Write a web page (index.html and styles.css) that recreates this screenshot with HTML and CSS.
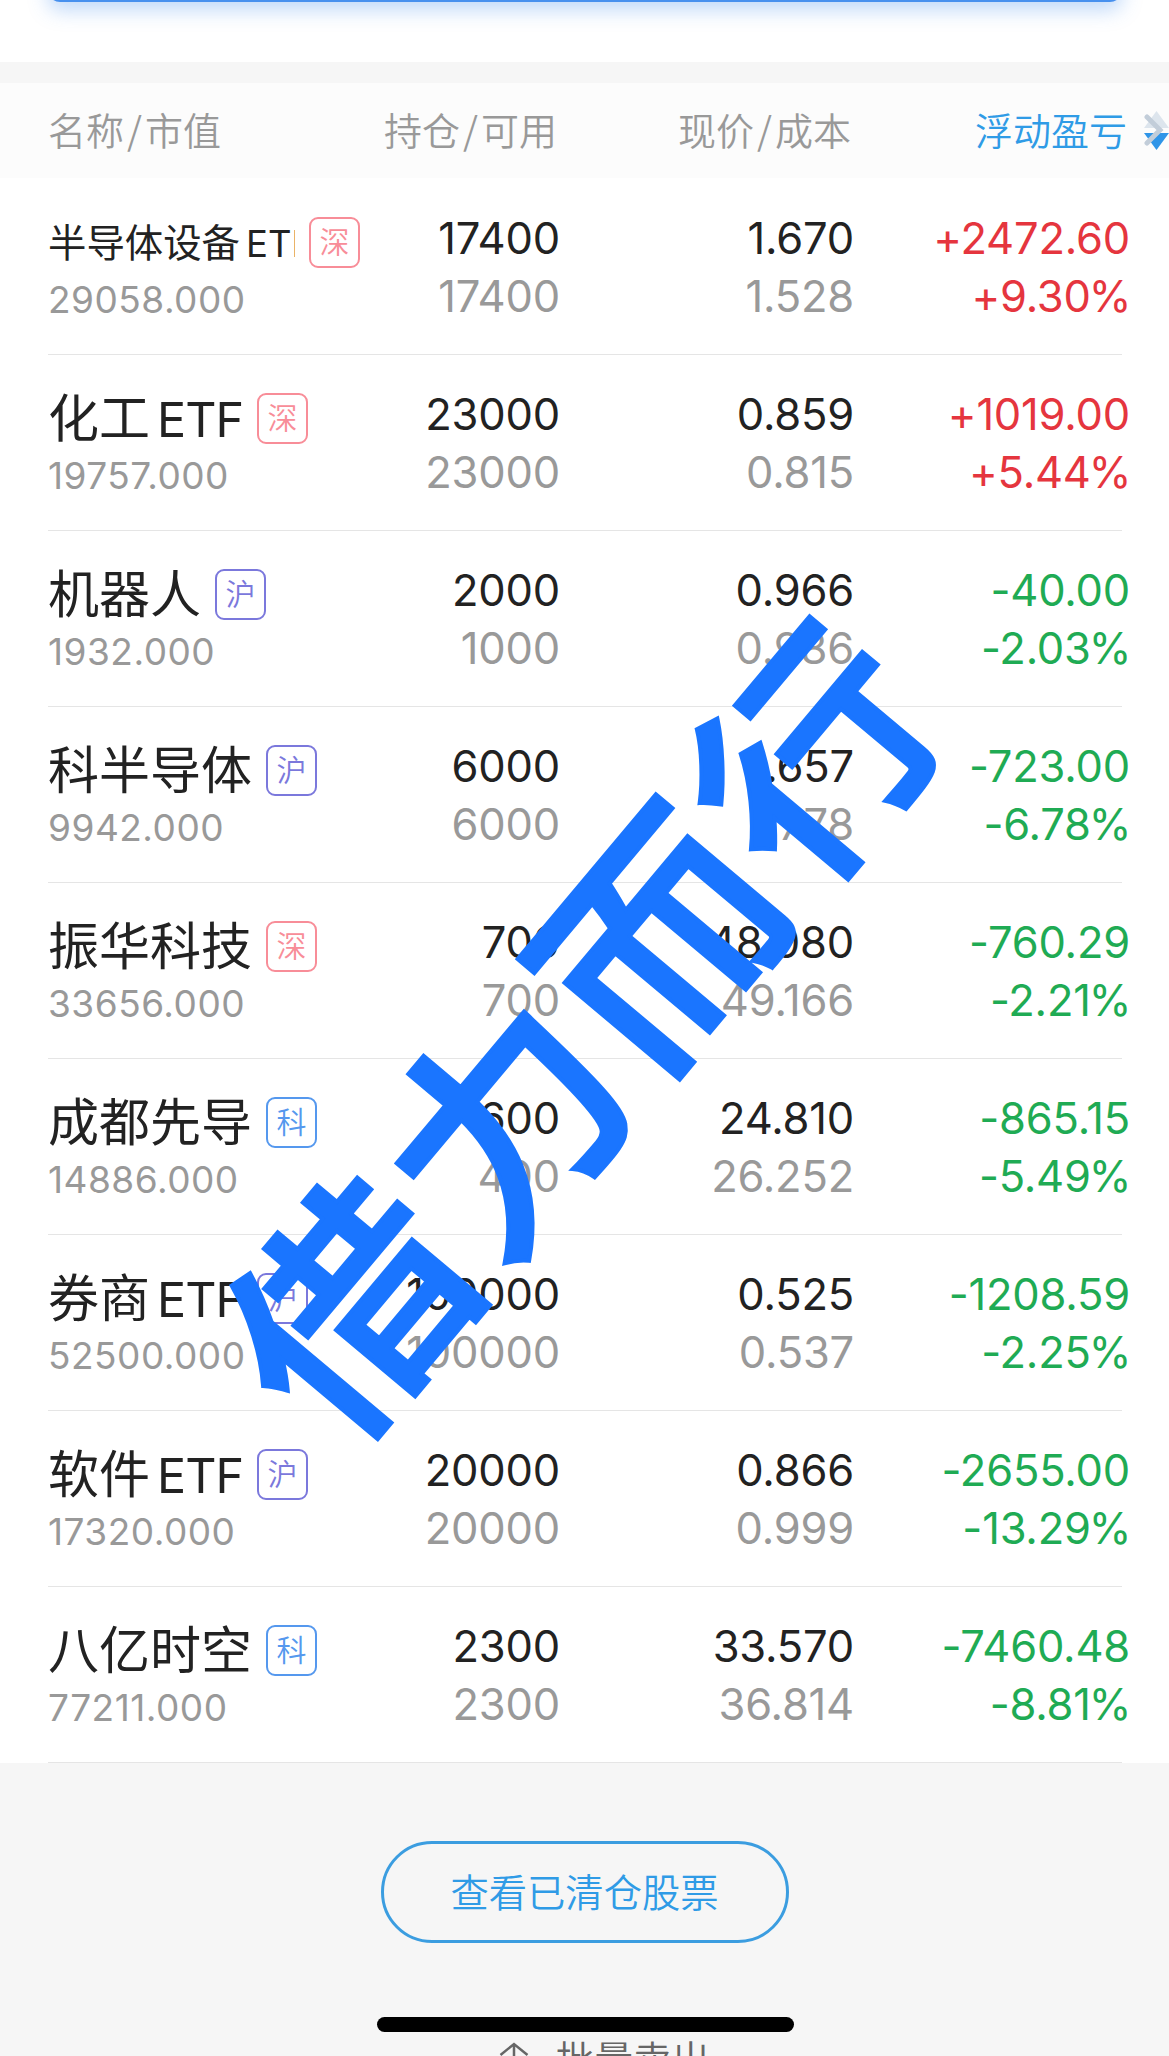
FILE: index.html
```
<!DOCTYPE html>
<html lang="zh-CN">
<head>
    <meta charset="UTF-8">
    <title>持仓</title>
    <link rel="stylesheet" href="styles.css">
</head>
<body>
<div class="page">
    <div class="banner-wrap">
        <div class="banner"></div>
    </div>
    <div class="table-head">
        <div class="cell-name">名称<span class="slash">/</span>市值</div>
        <div class="cell-hold">持仓<span class="slash">/</span>可用</div>
        <div class="cell-price">现价<span class="slash">/</span>成本</div>
        <div class="cell-profit active">浮动盈亏</div>
        <svg class="sort-icon" width="25" height="40" viewBox="0 0 25 40">
            <path d="M12.5 0 L25 17 H0 Z" fill="#dde5ed"/>
            <path d="M0 22 H25 L12.5 39 Z" fill="#2f95e8"/>
            <path d="M3 6 L16 19 L3 32" fill="none" stroke="#c2cdd9" stroke-width="5" stroke-linecap="round"/>
        </svg>
    </div>
    <div class="list">
        <div class="row">
            <div class="cell-name">
                <div class="title"><span class="name small">半导体设备<span class="latin">ETF</span></span><span class="tag shen">深</span></div>
                <div class="value">29058.000</div>
            </div>
            <div class="cell-hold"><p>17400</p><p class="sub">17400</p></div>
            <div class="cell-price"><p>1.670</p><p class="sub">1.528</p></div>
            <div class="cell-profit up"><p>+2472.60</p><p>+9.30<span class="pct">%</span></p></div>
        </div>
        <div class="row">
            <div class="cell-name">
                <div class="title"><span class="name">化工<span class="latin">ETF</span></span><span class="tag shen">深</span></div>
                <div class="value">19757.000</div>
            </div>
            <div class="cell-hold"><p>23000</p><p class="sub">23000</p></div>
            <div class="cell-price"><p>0.859</p><p class="sub">0.815</p></div>
            <div class="cell-profit up"><p>+1019.00</p><p>+5.44<span class="pct">%</span></p></div>
        </div>
        <div class="row">
            <div class="cell-name">
                <div class="title"><span class="name">机器人</span><span class="tag hu">沪</span></div>
                <div class="value">1932.000</div>
            </div>
            <div class="cell-hold"><p>2000</p><p class="sub">1000</p></div>
            <div class="cell-price"><p>0.966</p><p class="sub">0.986</p></div>
            <div class="cell-profit down"><p>-40.00</p><p>-2.03<span class="pct">%</span></p></div>
        </div>
        <div class="row">
            <div class="cell-name">
                <div class="title"><span class="name">科半导体</span><span class="tag hu">沪</span></div>
                <div class="value">9942.000</div>
            </div>
            <div class="cell-hold"><p>6000</p><p class="sub">6000</p></div>
            <div class="cell-price"><p>1.657</p><p class="sub">1.778</p></div>
            <div class="cell-profit down"><p>-723.00</p><p>-6.78<span class="pct">%</span></p></div>
        </div>
        <div class="row">
            <div class="cell-name">
                <div class="title"><span class="name">振华科技</span><span class="tag shen">深</span></div>
                <div class="value">33656.000</div>
            </div>
            <div class="cell-hold"><p>700</p><p class="sub">700</p></div>
            <div class="cell-price"><p>48.080</p><p class="sub">49.166</p></div>
            <div class="cell-profit down"><p>-760.29</p><p>-2.21<span class="pct">%</span></p></div>
        </div>
        <div class="row">
            <div class="cell-name">
                <div class="title"><span class="name">成都先导</span><span class="tag ke">科</span></div>
                <div class="value">14886.000</div>
            </div>
            <div class="cell-hold"><p>600</p><p class="sub">400</p></div>
            <div class="cell-price"><p>24.810</p><p class="sub">26.252</p></div>
            <div class="cell-profit down"><p>-865.15</p><p>-5.49<span class="pct">%</span></p></div>
        </div>
        <div class="row">
            <div class="cell-name">
                <div class="title"><span class="name">券商<span class="latin">ETF</span></span><span class="tag hu">沪</span></div>
                <div class="value">52500.000</div>
            </div>
            <div class="cell-hold"><p>100000</p><p class="sub">100000</p></div>
            <div class="cell-price"><p>0.525</p><p class="sub">0.537</p></div>
            <div class="cell-profit down"><p>-1208.59</p><p>-2.25<span class="pct">%</span></p></div>
        </div>
        <div class="row">
            <div class="cell-name">
                <div class="title"><span class="name">软件<span class="latin">ETF</span></span><span class="tag hu">沪</span></div>
                <div class="value">17320.000</div>
            </div>
            <div class="cell-hold"><p>20000</p><p class="sub">20000</p></div>
            <div class="cell-price"><p>0.866</p><p class="sub">0.999</p></div>
            <div class="cell-profit down"><p>-2655.00</p><p>-13.29<span class="pct">%</span></p></div>
        </div>
        <div class="row">
            <div class="cell-name">
                <div class="title"><span class="name">八亿时空</span><span class="tag ke">科</span></div>
                <div class="value">77211.000</div>
            </div>
            <div class="cell-hold"><p>2300</p><p class="sub">2300</p></div>
            <div class="cell-price"><p>33.570</p><p class="sub">36.814</p></div>
            <div class="cell-profit down"><p>-7460.48</p><p>-8.81<span class="pct">%</span></p></div>
        </div>
    </div>
    <div class="footer">
        <button class="cleared-btn">查看已清仓股票</button>
        <div class="home-bar"></div>
        <div class="batch">
            <svg width="30" height="36" viewBox="0 0 30 36">
                <path d="M1.5 13 L15 2 L28.5 13 M15 2 V36" fill="none" stroke="#666" stroke-width="2.5"/>
            </svg>
            <span>批量卖出</span>
        </div>
    </div>
    <div class="watermark">借力而行</div>
</div>
</body>
</html>
```

FILE: styles.css
```
html, body{
    margin: 0;
    padding: 0;
}

body{
    background: #f6f6f6;
    font-family: Inter, "Noto Sans CJK SC", sans-serif;
    color: #222;
}

p{
    margin: 0;
}

.page{
    position: relative;
    width: 1169px;
    height: 2056px;
    overflow: hidden;
    display: flex;
    flex-direction: column;
}

.banner-wrap{
    box-sizing: border-box;
    height: 62px;
    padding: 0 47px 0 48px;
    background: #fff;
    overflow: hidden;
    flex-shrink: 0;
}

.banner{
    height: 40px;
    margin-top: -38px;
    border-radius: 12px;
    background: #4790ee;
    box-shadow: 0 8px 20px rgba(71, 144, 238, 0.35);
}

.table-head, .row{
    display: grid;
    grid-template-columns: 312px 200px 294px 276px;
}

/* column titles */
.table-head{
    position: relative;
    box-sizing: border-box;
    height: 95px;
    margin-top: 21px;
    padding-left: 48px;
    background: #fcfcfc;
    font-family: "Noto Sans CJK SC", sans-serif;
    font-size: 38px;
    font-weight: 350;
    line-height: 91px;
    color: #999;
    flex-shrink: 0;
}

.table-head .cell-hold,
.table-head .cell-price,
.table-head .cell-profit{
    padding-right: 3px;
    text-align: right;
}

.slash{
    margin: 0 3px;
}

.table-head .active{
    color: #2f9be6;
}

.sort-icon{
    position: absolute;
    top: 28px;
    left: 1144px;
}

.list{
    padding-top: 1px;
    background: #fff;
    flex-shrink: 0;
}

.row{
    box-sizing: border-box;
    height: 176px;
    margin: 0 47px 0 48px;
    border-bottom: 1px solid #e5e5e5;
}

.cell-hold, .cell-price, .cell-profit{
    text-align: right;
    white-space: nowrap;
}

.row .cell-hold, .row .cell-price, .row .cell-profit{
    padding-top: 30px;
    font-size: 43.5px;
    line-height: 58px;
    letter-spacing: -0.2px;
}

.pct{
    margin-left: -2px;
    letter-spacing: -1.5px;
}

.title{
    display: flex;
    align-items: center;
    height: 51px;
    padding-top: 38px;
}

.name{
    padding-top: 1px;
    font-size: 51px;
    line-height: 60px;
    white-space: nowrap;
}

.latin{
    margin-left: 7px;
    font-size: 0.95em;
    letter-spacing: -1px;
}

.name.small{
    width: 248px;
    overflow: hidden;
    font-size: 38.4px;
}

.small .latin{
    margin-left: 6px;
    letter-spacing: 0;
}

.tag{
    box-sizing: border-box;
    width: 51px;
    height: 51px;
    margin-left: 14px;
    border: 2px solid;
    border-radius: 9px;
    font-size: 30px;
    font-weight: 350;
    line-height: 46px;
    text-align: center;
    flex-shrink: 0;
}

.shen{ color: #f88d98; }
.hu{ color: #7b78dc; }
.ke{ color: #5598ee; }

.value{
    padding-top: 9px;
    font-size: 37px;
    line-height: 46px;
    letter-spacing: 0.5px;
    color: #999;
}

.sub{
    color: #999;
}

.up{ color: #e5353e; }
.down{ color: #1fab54; }

.footer{
    display: flex;
    flex-direction: column;
    align-items: center;
}

.cleared-btn{
    box-sizing: border-box;
    width: 408px;
    height: 102px;
    margin-top: 78px;
    padding: 0 0 4px;
    border: 3px solid #3b9de0;
    border-radius: 51px;
    background: none;
    color: #2f9be6;
    font-family: "Noto Sans CJK SC", sans-serif;
    font-size: 38.3px;
    font-weight: 350;
}

.home-bar{
    width: 417px;
    height: 15px;
    margin: 74px 0 0 2px;
    border-radius: 8px;
    background: #000;
}

.batch{
    display: flex;
    gap: 27px;
    margin: 10px 0 0 40px;
    font-size: 38.6px;
    font-weight: 350;
    line-height: 36px;
    color: #666;
}

/* text laid over the whole list */
.watermark{
    position: absolute;
    top: 1022px;
    left: 574px;
    color: #1a75ff;
    font-family: "Noto Sans CJK SC", sans-serif;
    font-size: 238px;
    font-weight: 500;
    letter-spacing: 3px;
    line-height: 1;
    white-space: nowrap;
    -webkit-text-stroke: 4px #1a75ff;
    transform: translate(-50%, -50%) rotate(-50deg) scaleY(0.96);
}
```
